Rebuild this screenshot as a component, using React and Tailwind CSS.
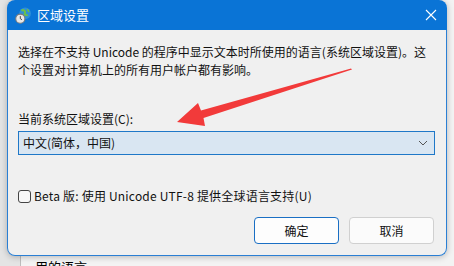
import React from 'react'

const font = { fontFamily: '"Noto Sans CJK SC", "Noto Sans", sans-serif' }

function RegionIcon() {
  return (
    <svg width="17" height="17" viewBox="0 0 16 16">
      <circle cx="9.5" cy="6" r="5.5" fill="#2f8fd8" />
      <path d="M6 3.5c1.5-1 3-.5 3.5.8.4 1-.8 1.6-.2 2.6.5.8 2 .3 2.4 1.4" fill="none" stroke="#6cc04a" strokeWidth="2" />
      <path d="M11.5 2.2c.8.6 1.4 1.6 1.5 2.6" fill="none" stroke="#6cc04a" strokeWidth="1.4" />
      <circle cx="5" cy="11" r="4.3" fill="#e8e8e8" stroke="#7a7a7a" strokeWidth="1" />
      <path d="M5 8.6V11l1.6 1" fill="none" stroke="#444" strokeWidth="0.9" />
    </svg>
  )
}

function App() {
  return (
    <div className="relative w-[454px] h-[266px] overflow-hidden bg-[#f3f3f3] flex" style={font}>
      {/* background window behind the dialog */}
      <div className="w-[21px] h-full bg-[#e4e4e4] border-r border-[#bdbdbd]"></div>
      <div className="flex-1 flex flex-col justify-end">
        <div className="pl-[14px] text-[13px] leading-[18px] text-black mb-[-10px]">用的语言。</div>
      </div>

      {/* dialog */}
      <div className="absolute left-[7px] top-0 w-[440px] h-[256px] flex flex-col rounded-[8px] shadow-[0_1px_6px_rgba(0,0,0,0.25)]">
        <div className="h-[30px] bg-[#0a74d6] rounded-t-[8px] flex items-center pl-[8px] pr-[10px]">
          <RegionIcon />
          <span className="ml-[5px] text-white text-[13px]">区域设置</span>
          <svg className="ml-auto" width="12" height="12" viewBox="0 0 12 12">
            <path d="M1 1l10 10M11 1L1 11" stroke="white" strokeWidth="1.1" />
          </svg>
        </div>
        <div className="flex-1 bg-[#f0f0f0] border border-t-0 border-[#2a7fd4] rounded-b-[8px] px-[10px] pt-[13px] text-[12px] leading-[18px] text-[#111]">
          <p>
            选择在不支持 Unicode 的程序中显示文本时所使用的语言(系统区域设置)。这
            <br />
            个设置对计算机上的所有用户帐户都有影响。
          </p>
          <div className="mt-[31px]">当前系统区域设置(C):</div>
          <div className="mt-[3px] h-[24px] w-[417px] bg-[#d9e6f2] border border-[#1f78c8] flex items-center pl-[4px] pr-[6px]">
            <span>中文(简体，中国)</span>
            <svg className="ml-auto" width="10" height="6" viewBox="0 0 10 6">
              <path d="M1 1l4 4 4-4" fill="none" stroke="#555" strokeWidth="1" />
            </svg>
          </div>
          <div className="mt-[32px] flex items-center">
            <span className="w-[13px] h-[13px] rounded-[3px] border border-[#444] bg-[#f7f7f7]"></span>
            <span className="ml-[3px] tracking-[0.2px]">Beta 版: 使用 Unicode UTF-8 提供全球语言支持(U)</span>
          </div>
          <div className="mt-[12px] flex justify-end gap-[10px] pr-[2px]">
            <button className="w-[85px] h-[27px] rounded-[4px] bg-[#fdfdfd] border border-[#1a6fc4] text-[12px]">确定</button>
            <button className="w-[85px] h-[27px] rounded-[4px] bg-[#fbfbfb] border border-[#d0d0d0] text-[12px]">取消</button>
          </div>
        </div>
      </div>

      {/* red annotation arrow */}
      <svg className="absolute left-0 top-0 pointer-events-none" width="454" height="266" viewBox="0 0 454 266">
        <polygon points="177,122 205,126 203.5,118 352,69.5 351,68.5 201,110.5 198,103" fill="#f23a3a" />
      </svg>
    </div>
  )
}

export default App
